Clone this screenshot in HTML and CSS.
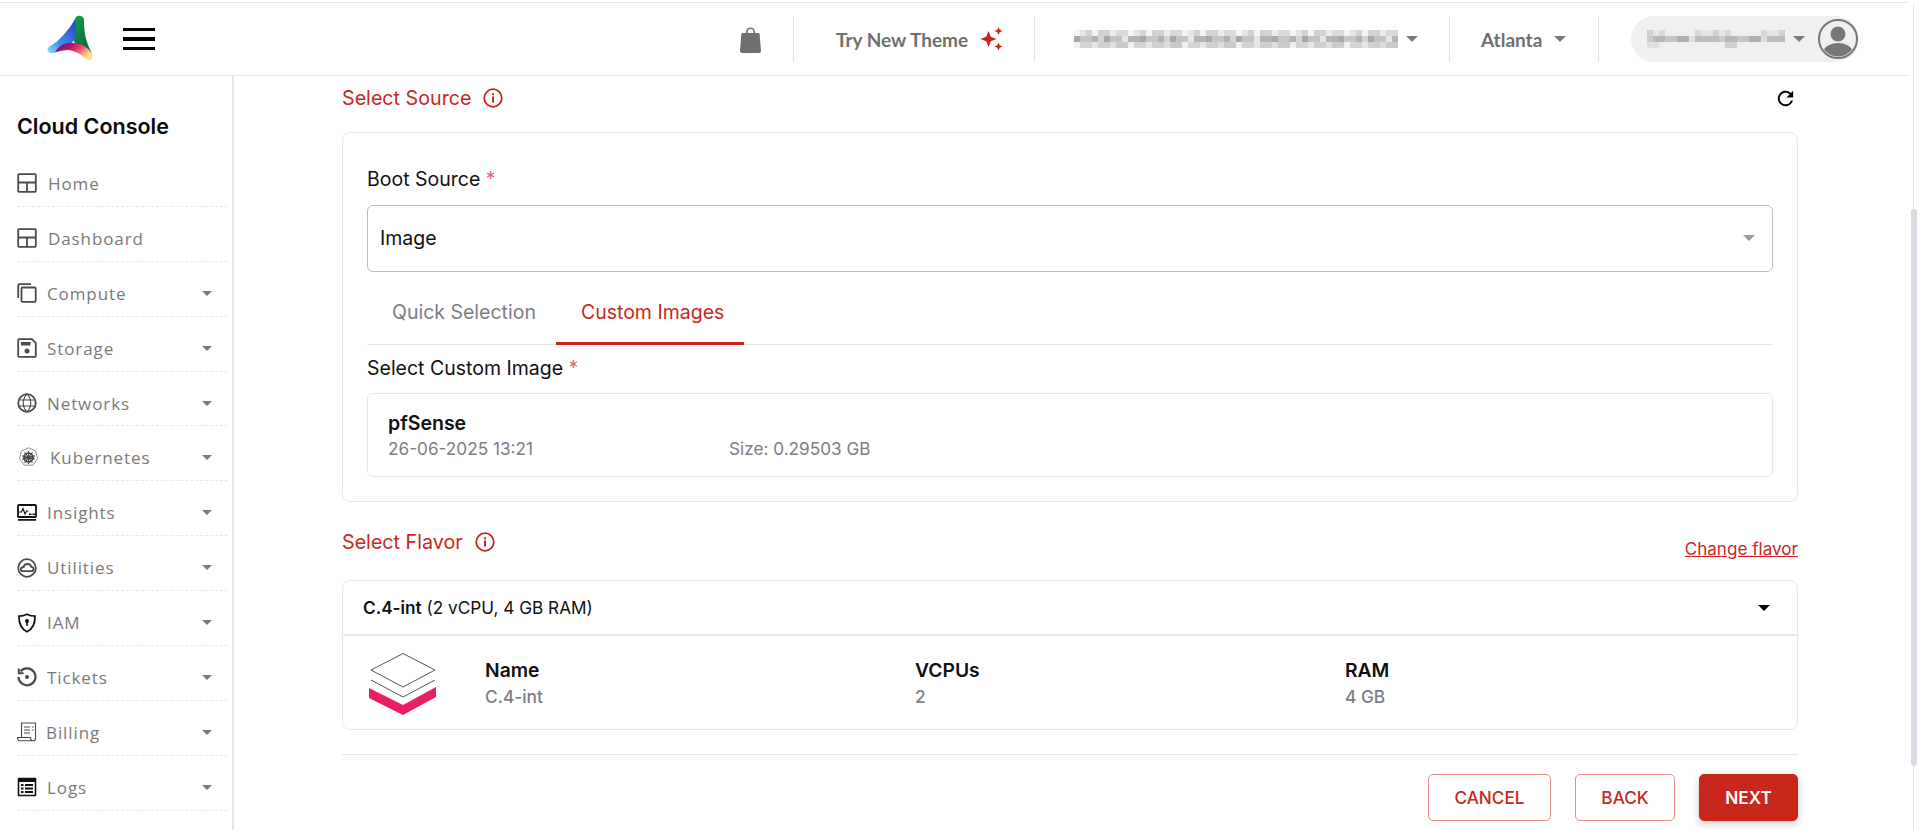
FILE: index.html
```html
<!doctype html>
<html lang="en">

<head>
  <meta charset="utf-8">
  <title>Cloud Console</title>
  <link rel="stylesheet" href="styles.css">
</head>

<body>
  <div class="page">
    <header class="topbar">
      <svg class="logo" viewBox="0 0 46 48">
        <defs>
          <linearGradient id="logoBlue" x1="0" y1="1" x2="1" y2="0">
            <stop offset="0" stop-color="#8fe0f7" />
            <stop offset="0.35" stop-color="#3f8fe8" />
            <stop offset="1" stop-color="#2440c8" />
          </linearGradient>
          <linearGradient id="logoGreen" x1="0" y1="0" x2="0.6" y2="1">
            <stop offset="0" stop-color="#16a34a" />
            <stop offset="1" stop-color="#0b6a3c" />
          </linearGradient>
          <linearGradient id="logoPink" x1="0" y1="0" x2="1" y2="0.5">
            <stop offset="0" stop-color="#3d1a80" />
            <stop offset="0.45" stop-color="#c4146c" />
            <stop offset="0.7" stop-color="#f4556c" />
            <stop offset="1" stop-color="#ffe58a" />
          </linearGradient>
        </defs>
        <path fill="url(#logoGreen)" d="M28 4C29 -1 37 0 37 5C37 18 39 28 45 38C36 35 28 30 24 22C26 16 27 9 28 4Z" />
        <path fill="url(#logoBlue)" d="M28 4C24 12 11 28 3 31C-1 33 0 39 5 38C15 37 24 32 29 21C29 14 29 8 28 4Z" />
        <path fill="url(#logoPink)" d="M8 37C14 28 21 27 27 28C36 29 42 33 45 39C47 45 42 47 39 44C34 39 28 36 22 35C16 35 12 36 8 37Z" />
      </svg>
      <div class="hamburger"><span></span><span></span><span></span></div>

      <div class="topbar-right">
        <svg class="bag" viewBox="0 0 21 27">
          <path d="M6 8V6a4.500 4.500 0 0 1 9 0v2h-1.600V6a2.900 2.900 0 0 0-5.800 0v2z" />
          <path d="M2.500 7h16c.6 0 1 .4 1.100 1L21 25c0 1.200-.8 2-2 2H2c-1.200 0-2-.8-2-2L1.400 8c.1-.6.500-1 1.100-1z" />
        </svg>
        <div class="top-cell theme-cell">
          <span class="top-text">Try New Theme</span>
          <svg class="sparkle" viewBox="0 0 23 24">
            <path d="M8.500 4l2.300 5.700 5.700 2.300-5.700 2.300-2.300 5.700-2.300-5.700L.5 12l5.700-2.300z" />
            <path d="M18.500 0l1.200 2.800 2.800 1.200-2.800 1.200-1.200 2.800-1.200-2.800-2.800-1.200 2.800-1.200z" />
            <path d="M18.500 15.500l1.200 2.800 2.800 1.200-2.800 1.200-1.200 2.800-1.200-2.800-2.800-1.200 2.800-1.200z" />
          </svg>
        </div>
        <div class="top-cell org-cell">
          <span class="mask mask-org"></span>
          <span class="caret"></span>
        </div>
        <div class="top-cell region-cell">
          <span class="top-text">Atlanta</span>
          <span class="caret"></span>
        </div>
        <div class="user-pill">
          <span class="mask mask-user"></span>
          <span class="caret"></span>
          <svg class="avatar" viewBox="0 0 40 40">
            <defs>
              <clipPath id="avatarClip"><circle cx="20" cy="20" r="17.500" /></clipPath>
            </defs>
            <circle cx="20" cy="20" r="19" fill="none" stroke="#777" stroke-width="2" />
            <circle cx="20" cy="15" r="7.500" fill="#777" />
            <ellipse cx="20" cy="34" rx="15" ry="10" fill="#777" clip-path="url(#avatarClip)" />
          </svg>
        </div>
      </div>
    </header>

    <div class="layout">
      <aside class="sidebar">
        <h2 class="side-title">Cloud Console</h2>
        <ul class="nav">
          <li class="nav-item">
            <svg class="nav-icon" viewBox="0 0 20 20"><path class="line" d="M2 1.200h16c.5 0 .8.300.8.800v16c0 .5-.3.800-.8.800H2c-.5 0-.8-.3-.8-.8V2c0-.5.300-.8.800-.8zM1.500 9.500h17M10 9.500v9" /></svg>
            <span class="nav-label nav-label-home">Home</span>
          </li>
          <li class="nav-item">
            <svg class="nav-icon" viewBox="0 0 20 20"><path class="line" d="M2 1.200h16c.5 0 .8.300.8.800v16c0 .5-.3.800-.8.800H2c-.5 0-.8-.3-.8-.8V2c0-.5.300-.8.800-.8zM1.500 9.500h17M10 9.500v9" /></svg>
            <span class="nav-label nav-label-home">Dashboard</span>
          </li>
          <li class="nav-item">
            <svg class="nav-icon" viewBox="0 0 20 20"><path class="line" d="M5.500 4.500h12c.7 0 1.200.5 1.200 1.200v12.100c0 .6-.5 1-1.200 1h-12c-.6 0-1-.4-1-1V5.500c0-.6.400-1 1-1zM1.200 15V2.500c0-.7.500-1.300 1.300-1.300H14" /></svg>
            <span class="nav-label">Compute</span>
            <span class="nav-caret"></span>
          </li>
          <li class="nav-item">
            <svg class="nav-icon" viewBox="0 0 20 20"><path class="line" d="M2 1.200h13l3.800 3.800v13c0 .5-.3.800-.8.800H2c-.5 0-.8-.3-.8-.8V2c0-.5.300-.8.800-.8z" /><path class="solid" d="M4 4h9.500v3.500H4z" /><circle class="solid" cx="10" cy="13" r="2.500" /></svg>
            <span class="nav-label">Storage</span>
            <span class="nav-caret"></span>
          </li>
          <li class="nav-item">
            <svg class="nav-icon" viewBox="0 0 20 20"><circle class="line" cx="10" cy="10" r="8.800" /><path class="thin" d="M1.500 7h17M1.500 13h17M10 1.200c-5 5-5 12.600 0 17.600M10 1.200c5 5 5 12.600 0 17.600" /></svg>
            <span class="nav-label">Networks</span>
            <span class="nav-caret"></span>
          </li>
          <li class="nav-item">
            <svg class="nav-icon nav-icon-k8s" viewBox="0 0 20 20"><path class="hair" d="M10 .7l6.800 3.200 1.900 7.200-4.600 6.200H5.900l-4.600-6.200 1.900-7.200z" /><circle class="line" cx="10" cy="10" r="4.200" /><path class="thin" d="M10 3.800v12.400M4 8.500l12 3M16 8.500l-12 3M6.200 5l7.600 10M13.800 5l-7.600 10" /></svg>
            <span class="nav-label nav-label-k8s">Kubernetes</span>
            <span class="nav-caret"></span>
          </li>
          <li class="nav-item">
            <svg class="nav-icon nav-icon-dark" viewBox="0 0 20 20"><path class="line" d="M1.800 2h16.400c.5 0 .8.300.8.800v10.400c0 .5-.3.800-.8.800H1.800c-.5 0-.8-.3-.8-.8V2.800c0-.5.300-.8.800-.8z" /><path class="solid" d="M1 16h18v1.800H1zM12 10.500h2.500v1.600H12zM15.500 10.500H18v1.600h-2.500z" /><path class="thin" d="M2 9h2.500l1.500-3.500 2 5.500 1.500-3h2" /></svg>
            <span class="nav-label">Insights</span>
            <span class="nav-caret"></span>
          </li>
          <li class="nav-item">
            <svg class="nav-icon" viewBox="0 0 20 20"><circle class="line" cx="10" cy="10" r="8.800" /><path class="line" d="M6 13.200h8.200c1.400 0 2.300-1 2.300-2.200s-1-2.200-2.200-2.200C13.800 7 12 6 10.500 6 8.500 6 7 7.300 6.700 9 5 9.100 3.800 10 3.800 11.300c0 1 1 1.900 2.200 1.900z" /></svg>
            <span class="nav-label">Utilities</span>
            <span class="nav-caret"></span>
          </li>
          <li class="nav-item">
            <svg class="nav-icon nav-icon-dark" viewBox="0 0 20 20"><path class="line" d="M10 1.200c2.500 1.300 5.200 2 8 2 .2 6.800-2 12.500-8 15.600C4 15.700 1.800 10 2 3.200c2.800 0 5.500-.7 8-2z" /><circle class="solid" cx="10" cy="8" r="2" /><path class="solid" d="M9.200 9h1.600v4H9.200z" /></svg>
            <span class="nav-label">IAM</span>
            <span class="nav-caret"></span>
          </li>
          <li class="nav-item">
            <svg class="nav-icon" viewBox="0 0 20 20"><path class="wide" d="M3.500 4.300A8.500 8.500 0 1 1 1.500 10" /><path class="solid" d="M.8 1.500h2v3.800h3.800v2H.8z" /><circle class="solid" cx="10" cy="10" r="2" /></svg>
            <span class="nav-label">Tickets</span>
            <span class="nav-caret"></span>
          </li>
          <li class="nav-item">
            <svg class="nav-icon nav-icon-bill" viewBox="0 0 20 20"><path class="thin" d="M4.500 15.500V1h14v15.500c0 1.300-.8 2.300-2.200 2.300H2.500c-1.100 0-1.800-1-1.800-1.800v-1.500h13v1.500c0 1 1 1.800 2.500 1.800M7 5h6M7 8h6M7 11h6M15 5h1.500M15 8h1.500" /></svg>
            <span class="nav-label nav-label-bill">Billing</span>
            <span class="nav-caret"></span>
          </li>
          <li class="nav-item">
            <svg class="nav-icon nav-icon-dark" viewBox="0 0 20 20"><path class="solid" d="M1.500 .8h17c.5 0 .8.300.8.800v16.800c0 .5-.3.800-.8.800h-17c-.5 0-.8-.3-.8-.8V1.600c0-.5.300-.8.800-.8zM2.300 5v12.800h15.400V5z" /><path class="solid" d="M4 7h2.500v2H4zM8 7h8v2H8zM4 10.500h2.500v2H4zM8 10.500h8v2H8zM4 14h2.500v2H4zM8 14h8v2H8z" /></svg>
            <span class="nav-label">Logs</span>
            <span class="nav-caret"></span>
          </li>
        </ul>
      </aside>

      <main class="main">
        <div class="section-head">
          <span class="section-title">Select Source</span>
          <svg class="info-icon" viewBox="0 0 20 20">
            <circle cx="10" cy="10" r="8.800" fill="none" stroke="#c8281c" stroke-width="1.800" />
            <path d="M9 8.500h2v6H9zM9 5.200h2v2H9z" fill="#c8281c" />
          </svg>
          <svg class="refresh-icon" viewBox="0 0 24 24">
            <path d="M17.650 6.350A7.958 7.958 0 0 0 12 4c-4.420 0-7.990 3.580-7.990 8s3.570 8 7.990 8c3.730 0 6.840-2.550 7.730-6h-2.080A5.990 5.990 0 0 1 12 18c-3.310 0-6-2.690-6-6s2.690-6 6-6c1.660 0 3.140.690 4.220 1.780L13 11h7V4l-2.350 2.350z" />
          </svg>
        </div>

        <section class="card">
          <div class="field-label">Boot Source <span class="req">*</span></div>
          <div class="select">
            <span>Image</span>
            <span class="select-caret"></span>
          </div>
          <div class="tabs">
            <div class="tab">Quick Selection</div>
            <div class="tab tab-active">Custom Images</div>
          </div>
          <div class="field-label custom-label">Select Custom Image <span class="req">*</span></div>
          <div class="image-card">
            <div class="image-name">pfSense</div>
            <div class="image-meta">
              <span class="image-date">26-06-2025 13:21</span>
              <span>Size: 0.29503 GB</span>
            </div>
          </div>
        </section>

        <div class="flavor-head">
          <span class="section-title">Select Flavor</span>
          <svg class="info-icon" viewBox="0 0 20 20">
            <circle cx="10" cy="10" r="8.800" fill="none" stroke="#c8281c" stroke-width="1.800" />
            <path d="M9 8.500h2v6H9zM9 5.200h2v2H9z" fill="#c8281c" />
          </svg>
          <a class="change-link" href="#">Change flavor</a>
        </div>

        <section class="accordion">
          <div class="acc-head">
            <span><b>C.4-int</b> (2 vCPU, 4 GB RAM)</span>
            <span class="acc-caret"></span>
          </div>
          <div class="acc-body">
            <svg class="stack-icon" viewBox="0 0 68 62">
              <path d="M34 .5L66 17 34 34 2 17z" fill="none" stroke="#555" stroke-width="1" />
              <path d="M2 27L34 44 66 27" fill="none" stroke="#555" stroke-width="1" />
              <path d="M0 35L34 52 67 34V44L34 62 0 45z" fill="#e91e63" />
            </svg>
            <div>
              <div class="spec-name">Name</div>
              <div class="spec-value">C.4-int</div>
            </div>
            <div>
              <div class="spec-name">VCPUs</div>
              <div class="spec-value">2</div>
            </div>
            <div>
              <div class="spec-name">RAM</div>
              <div class="spec-value">4 GB</div>
            </div>
          </div>
        </section>

        <hr class="rule">

        <div class="actions">
          <button class="btn btn-cancel">CANCEL</button>
          <button class="btn btn-back">BACK</button>
          <button class="btn btn-next">NEXT</button>
        </div>
      </main>
    </div>

    <div class="scroll-track"><div class="scroll-thumb"></div></div>
  </div>
</body>

</html>
```

FILE: styles.css
```css
* {
  box-sizing: border-box;
}

body {
  margin: 0;
  background: #fff;
  font-family: Inter, "Liberation Sans", sans-serif;
  color: #111;
}

.page {
  position: relative;
  width: 1920px;
  height: 830px;
  overflow: hidden;
}

/* top bar */
.topbar {
  display: flex;
  align-items: center;
  width: 1908px;
  height: 74px;
  margin-top: 2px;
  padding: 0 49px 0 47px;
  border-top: 1px solid #e5e5e5;
  border-bottom: 1px solid #e5e5e5;
}

.logo {
  width: 46px;
  height: 48px;
}

.hamburger {
  display: flex;
  flex-direction: column;
  gap: 6px;
  width: 32px;
  margin-left: 30px;
}

.hamburger span {
  height: 3.5px;
  background: #000;
}

.topbar-right {
  display: flex;
  align-items: center;
  margin-left: auto;
}

.bag {
  width: 21px;
  height: 27px;
  margin-right: 32px;
  fill: #6f6f6f;
}

.top-cell {
  display: flex;
  align-items: center;
  height: 46px;
  border-left: 1px solid #e3e3e3;
}

.top-text {
  font-family: Lato, sans-serif;
  font-size: 19px;
  font-weight: 700;
  color: #6f6f6f;
}

.theme-cell {
  width: 241px;
  padding-left: 42px;
}

.sparkle {
  width: 23px;
  height: 24px;
  margin-left: 12px;
  fill: #c8281c;
}

.org-cell {
  width: 415px;
  padding-left: 39px;
}

.region-cell {
  width: 150px;
  padding-left: 31px;
  border-right: 1px solid #e3e3e3;
}

.caret {
  width: 0;
  height: 0;
  margin-left: 8px;
  border-left: 6px solid transparent;
  border-right: 6px solid transparent;
  border-top: 6px solid #7b7b7b;
}

.region-cell .caret {
  margin-left: 12px;
}

.mask {
  display: block;
  height: 18px;
}

.mask-org {
  width: 324px;
  background:
    repeating-linear-gradient(90deg, #f4f4f4 0 6px, #e4e4e4 6px 12px, #d2d2d2 12px 18px, #f4f4f4 18px 24px, #d2d2d6 24px 36px, #ececec 36px 42px, #dcdad7 42px 54px) 0 0 / 100% 6px no-repeat,
    repeating-linear-gradient(90deg, #a9a9ab 0 6px, #c6c6c8 6px 18px, #b0b2b6 18px 24px, #d6d4d0 24px 30px, #a8a8a8 30px 36px, #c4c4c4 36px 48px, #e4e6e8 48px 54px, #b4b4b4 54px 66px) 0 6px / 100% 6px no-repeat,
    repeating-linear-gradient(90deg, #f0f0f0 0 6px, #d4d4d4 6px 18px, #e6e6e6 18px 24px, #cfcfcf 24px 36px, #dcdfe2 36px 42px, #ccc9c6 42px 54px) 0 12px / 100% 6px no-repeat;
}

.user-pill {
  display: flex;
  align-items: center;
  width: 228px;
  height: 46px;
  margin-left: 32px;
  padding: 0 1px 0 16px;
  border-radius: 23px;
  background: #f0f0f0;
}

.mask-user {
  width: 138px;
  background:
    repeating-linear-gradient(90deg, #d4d0ce 0 6px, #e6e6e6 6px 12px, #d8d8d8 12px 18px, #efefef 18px 48px, #d8d8dc 48px 54px, #e4e4e4 54px 66px) 0 0 / 100% 6px no-repeat,
    repeating-linear-gradient(90deg, #cfcac6 0 6px, #b6b8bc 6px 18px, #c8c6c2 18px 30px, #b0b0b0 30px 42px, #d8dee4 42px 48px, #c0bebc 48px 72px) 0 6px / 100% 6px no-repeat,
    linear-gradient(90deg, #e2e0de 12px, #efefef 12px 78px, #cfcfd2 78px 90px, #efefef 90px) 0 12px / 100% 6px no-repeat;
}

.avatar {
  width: 40px;
  height: 40px;
  margin-left: auto;
}

/* side menu */
.layout {
  display: flex;
}

.sidebar {
  flex: none;
  width: 234px;
  height: 754px;
  padding: 36px 4px 0 17px;
  border-right: 2px solid #e5e5e5;
}

.side-title {
  margin: 0 0 12px;
  font-size: 21.500px;
  line-height: 28px;
  font-weight: 600;
  color: #0a0a0a;
}

.nav {
  margin: 0;
  padding: 0;
  list-style: none;
}

.nav-item {
  display: flex;
  align-items: center;
  height: 54.9px;
  padding-top: 9px;
  border-bottom: 1px dashed #e6e6e6;
}

.nav-icon {
  flex: none;
  width: 20px;
  height: 20px;
  color: #4a4a4a;
}

.nav-icon-dark {
  color: #111;
}

.nav-icon-k8s {
  width: 21px;
  height: 21px;
  margin-left: 1px;
}

.nav-icon .line {
  fill: none;
  stroke: currentColor;
  stroke-width: 1.800;
}

.nav-icon .wide {
  fill: none;
  stroke: currentColor;
  stroke-width: 2.200;
}

.nav-icon .thin {
  fill: none;
  stroke: currentColor;
  stroke-width: 1.100;
}

.nav-icon .hair {
  fill: none;
  stroke: currentColor;
  stroke-width: 0.600;
}

.nav-icon .solid {
  fill: currentColor;
}

.nav-label {
  margin-left: 10px;
  font-family: "Open Sans", sans-serif;
  font-size: 17px;
  letter-spacing: 0.9px;
  color: #7a7a7a;
}

.nav-label-home {
  margin-left: 11px;
}

.nav-label-k8s {
  margin-left: 11px;
}

.nav-label-bill {
  margin-left: 9px;
}

.nav-caret {
  width: 0;
  height: 0;
  margin-left: auto;
  margin-right: 16px;
  border-left: 5.500px solid transparent;
  border-right: 5.500px solid transparent;
  border-top: 5.500px solid #7b7b7b;
}

/* main column */
.main {
  width: 1686px;
  padding: 0 122px 0 108px;
}

.section-head {
  display: flex;
  align-items: center;
  height: 44px;
  margin-bottom: 12px;
}

.section-title {
  font-size: 19.700px;
  color: #c8281c;
}

.info-icon {
  width: 20px;
  height: 20px;
  margin-left: 12px;
}

.refresh-icon {
  width: 23px;
  height: 23px;
  margin-left: auto;
  margin-right: 1px;
  fill: #000;
}

.card {
  height: 370px;
  padding: 34px 24px 0;
  border: 1px solid #e8e8e8;
  border-radius: 8px;
}

.field-label {
  font-size: 19.500px;
  line-height: 24px;
}

.req {
  color: #e8636a;
}

.select {
  display: flex;
  align-items: center;
  justify-content: space-between;
  height: 67px;
  margin-top: 14px;
  padding: 0 17px 2px 12px;
  border: 1px solid #bdbdbd;
  border-radius: 6px;
  font-size: 19.500px;
}

.select-caret {
  border-left: 6px solid transparent;
  border-right: 6px solid transparent;
  border-top: 6px solid #9a9aa0;
}

.tabs {
  display: flex;
  height: 65px;
  margin-top: 8px;
  border-bottom: 1px solid #e5e5e5;
}

.tab {
  height: 65px;
  padding: 21px 20px 0 25px;
  font-size: 19.500px;
  line-height: 22px;
  color: #7d7d85;
}

.tab-active {
  color: #c8281c;
  border-bottom: 3px solid #c8281c;
}

.custom-label {
  margin-top: 11px;
}

.image-card {
  height: 84px;
  margin-top: 13px;
  padding: 17px 20px 0;
  border: 1px solid #e8e8e8;
  border-radius: 6px;
}

.image-name {
  font-size: 19.500px;
  line-height: 24px;
  font-weight: 600;
}

.image-meta {
  display: flex;
  margin-top: 4px;
  font-size: 17.200px;
  line-height: 20px;
  color: #7d7d85;
}

.image-date {
  width: 341px;
}

.flavor-head {
  display: flex;
  align-items: flex-start;
  height: 59px;
  margin-top: 19px;
}

.flavor-head .section-title {
  line-height: 42px;
}

.flavor-head .info-icon {
  margin-top: 11px;
}

.change-link {
  margin-top: 16px;
  margin-left: auto;
  font-size: 17.100px;
  line-height: 24px;
  color: #c8281c;
}

.accordion {
  height: 150px;
  border: 1px solid #e8e8e8;
  border-radius: 8px;
}

.acc-head {
  display: flex;
  align-items: center;
  justify-content: space-between;
  height: 55px;
  padding: 0 27px 0 20px;
  border-bottom: 2px solid #e8e8e8;
  font-size: 17.200px;
}

.acc-head b {
  font-weight: 600;
}

.acc-caret {
  border-left: 6.500px solid transparent;
  border-right: 6.500px solid transparent;
  border-top: 6.500px solid #000;
}

.acc-body {
  display: grid;
  grid-template-columns: 116px 430px 430px 1fr;
  align-items: start;
  padding: 15px 0 0 26px;
}

.stack-icon {
  width: 68px;
  height: 62px;
  margin-top: 2px;
}

.spec-name {
  margin-top: 8px;
  font-size: 19.300px;
  line-height: 22px;
  font-weight: 600;
}

.spec-value {
  margin-top: 6px;
  font-size: 17.300px;
  line-height: 20px;
  font-weight: 500;
  color: #7d7d85;
}

.rule {
  height: 1px;
  margin: 24px 0 0;
  border: 0;
  background: #e5e5e5;
}

.actions {
  display: flex;
  justify-content: flex-end;
  gap: 24px;
  margin-top: 19px;
}

.btn {
  height: 47px;
  border: 1px solid #e88a85;
  border-radius: 5px;
  background: #fff;
  font-family: Inter, sans-serif;
  font-size: 17.200px;
  font-weight: 500;
  color: #c8281c;
}

.btn-cancel {
  width: 123px;
}

.btn-back {
  width: 100px;
}

.btn-next {
  width: 99px;
  border-color: #c8281c;
  background: #c8281c;
  font-weight: 600;
  color: #fff;
  box-shadow: 0 3px 8px rgba(0, 0, 0, 0.2);
}

/* page scrollbar */
.scroll-track {
  position: absolute;
  top: 3px;
  right: 6px;
  bottom: 0;
  width: 1px;
  background: #e8e8ee;
}

.scroll-thumb {
  position: absolute;
  top: 206px;
  left: -2px;
  width: 6px;
  height: 557px;
  border-radius: 3px;
  background: #d8dbe4;
}
```
